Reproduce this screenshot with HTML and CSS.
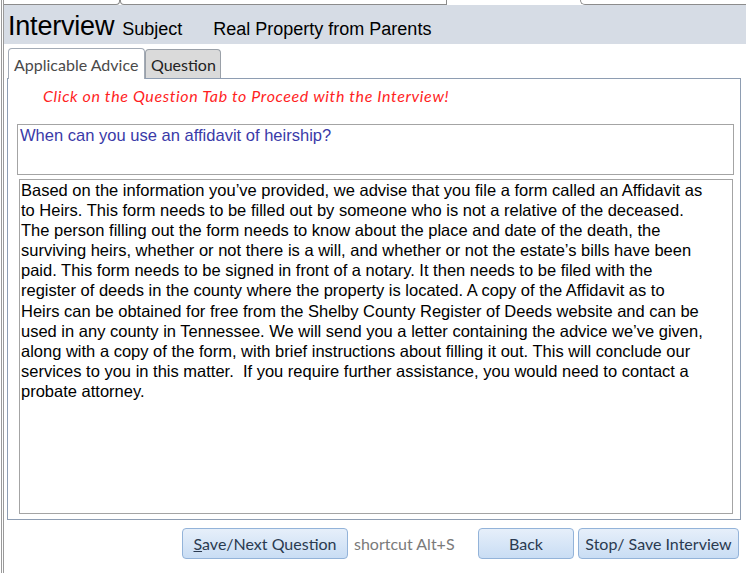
FILE: index.html
```html
<!DOCTYPE html>
<html>
<head>
<meta charset="utf-8">
<link rel="stylesheet" href="styles.css">
</head>
<body>
<div class="window">
  <div class="doc-tabs">
    <div class="dt dt-1"></div>
    <div class="dt dt-2"></div>
    <div class="dt dt-active"></div>
    <div class="dt dt-4"></div>
  </div>
  <header class="title-bar">
    <span class="title">Interview</span>
    <span class="subject-label">Subject</span>
    <span class="subject">Real Property from Parents</span>
  </header>
  <div class="content">
    <div class="tabs">
      <div class="tab tab-active">Applicable Advice</div>
      <div class="tab tab-inactive">Question</div>
    </div>
    <div class="pane">
      <p class="notice">Click on the Question Tab to Proceed with the Interview!</p>
      <div class="question-box">When can you use an affidavit of heirship?</div>
      <div class="answer-box">Based on the information you’ve provided, we advise that you file a form called an Affidavit as<br>to Heirs. This form needs to be filled out by someone who is not a relative of the deceased.<br>The person filling out the form needs to know about the place and date of the death, the<br>surviving heirs, whether or not there is a will, and whether or not the estate’s bills have been<br>paid. This form needs to be signed in front of a notary. It then needs to be filed with the<br>register of deeds in the county where the property is located. A copy of the Affidavit as to<br>Heirs can be obtained for free from the Shelby County Register of Deeds website and can be<br>used in any county in Tennessee. We will send you a letter containing the advice we’ve given,<br>along with a copy of the form, with brief instructions about filling it out. This will conclude our<br>services to you in this matter.&nbsp; If you require further assistance, you would need to contact a<br>probate attorney.</div>
    </div>
    <div class="actions">
      <button class="btn btn-save"><u>S</u>ave/Next Question</button>
      <span class="shortcut">shortcut Alt+S</span>
      <button class="btn btn-back">Back</button>
      <button class="btn btn-stop">Stop/ Save Interview</button>
    </div>
  </div>
</div>
</body>
</html>
```

FILE: styles.css
```css
html, body {
  margin: 0;
  padding: 0;
  background: #ffffff;
}

.window {
  margin-left: 1px;
  border-left: 3px double #9a9a9a;
  height: 573px;
  box-sizing: border-box;
  display: flex;
  flex-direction: column;
}

.doc-tabs {
  height: 5px;
  display: flex;
}

.dt {
  box-sizing: border-box;
  height: 5px;
  border-bottom: 1px solid #8c8c8c;
}

.dt-1 {
  width: 116px;
  border-right: 1px solid #8c8c8c;
  border-bottom-right-radius: 4px;
}

.dt-2 {
  width: 327px;
  border-left: 1px solid #8c8c8c;
  border-right: 1px solid #8c8c8c;
  border-bottom-left-radius: 4px;
}

.dt-active {
  width: 133px;
  border-bottom: none;
}

.dt-4 {
  flex: 1;
  border-left: 1px solid #8c8c8c;
  border-bottom-left-radius: 5px;
}

.title-bar {
  box-sizing: border-box;
  height: 39px;
  background: #d6dce5;
  display: flex;
  align-items: baseline;
  padding-left: 4px;
  padding-top: 3px;
  font-family: "Liberation Sans", Arial, sans-serif;
  color: #000;
  line-height: 36px;
}

.title {
  font-size: 27px;
  letter-spacing: -0.2px;
}

.subject-label {
  font-size: 18px;
  margin-left: 8px;
}

.subject {
  font-size: 18px;
  margin-left: 31px;
}

.content {
  padding-left: 3px;
  padding-top: 4px;
}

.tabs {
  display: flex;
  align-items: flex-end;
  margin-left: 1px;
  height: 30px;
  position: relative;
  z-index: 1;
}

.tab {
  box-sizing: border-box;
  font-family: Lato, "Open Sans", sans-serif;
  font-size: 16px;
  border: 1px solid #a3abb6;
  border-bottom: none;
  border-radius: 4px 4px 0 0;
  padding-left: 5px;
}

.tab-active {
  width: 137px;
  height: 31px;
  line-height: 32px;
  background: #ffffff;
  color: #4a4a4a;
  margin-bottom: -1px;
}

.tab-inactive {
  width: 76px;
  height: 29px;
  line-height: 29px;
  background: #dadada;
  color: #222;
  padding-left: 5px;
  border-color: #9aa0a8;
}

.pane {
  box-sizing: border-box;
  width: 734px;
  height: 442px;
  border: 1px solid #8e9db2;
  padding: 7px 0 0 9px;
}

.notice {
  margin: 0 0 0 26px;
  font-family: Lato, "Open Sans", sans-serif;
  font-style: italic;
  font-size: 16px;
  letter-spacing: 0.62px;
  line-height: 20px;
  color: #ff1f1f;
}

.question-box {
  box-sizing: border-box;
  margin-top: 18px;
  width: 717px;
  height: 51px;
  border: 1px solid #a4a4a4;
  padding: 1px 2px;
  font-family: "Liberation Sans", Arial, sans-serif;
  font-size: 16.55px;
  line-height: 20px;
  color: #3a3aa8;
}

.answer-box {
  box-sizing: border-box;
  margin-top: 4px;
  margin-left: 2px;
  width: 714px;
  height: 335px;
  border: 1px solid #a4a4a4;
  padding: 0 0 0 1px;
  font-family: "Liberation Sans", Arial, sans-serif;
  font-size: 16.5px;
  line-height: 20.1px;
  color: #000;
  white-space: nowrap;
  overflow: hidden;
}

.actions {
  display: flex;
  align-items: center;
  margin-top: 8px;
  padding-left: 175px;
  height: 31px;
}

.btn {
  box-sizing: border-box;
  height: 31px;
  border: 1px solid #93b3d9;
  border-radius: 4px;
  background: linear-gradient(#e6effa, #c9ddf4);
  font-family: Lato, "Open Sans", sans-serif;
  font-size: 16px;
  color: #2a3a50;
  padding: 0;
}

.btn-save {
  width: 166px;
}

.shortcut {
  font-family: Lato, "Open Sans", sans-serif;
  font-size: 16px;
  color: #7a7a7a;
  margin-left: 6px;
  width: 124px;
}

.btn-back {
  width: 96px;
}

.btn-stop {
  width: 161px;
  margin-left: 4px;
}
```
